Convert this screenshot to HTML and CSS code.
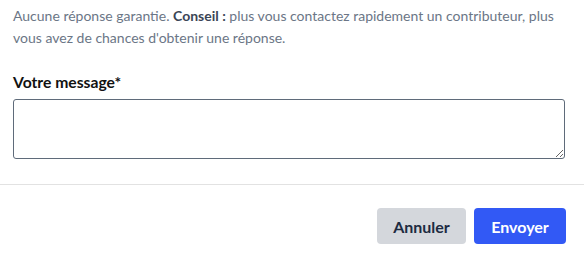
FILE: index.html
```html
<!DOCTYPE html>
<html lang="fr">
<head>
<meta charset="utf-8">
<link rel="stylesheet" href="styles.css">
</head>
<body>
<div class="modal">
  <div class="content">
    <p class="note">Aucune réponse garantie. <strong>Conseil :</strong> plus vous contactez rapidement un contributeur, plus vous avez de chances d'obtenir une réponse.</p>
    <label class="label" for="msg">Votre message*</label>
    <textarea id="msg" class="field"></textarea>
  </div>
  <div class="footer">
    <button class="btn btn-cancel">Annuler</button>
    <button class="btn btn-primary">Envoyer</button>
  </div>
</div>
</body>
</html>
```
FILE: styles.css
```css
* { box-sizing: border-box; }
html, body { margin: 0; padding: 0; background: #fff; }
body { font-family: Lato, "Liberation Sans", sans-serif; }
.modal { width: 584px; }
.content { padding: 5px 19px 25px 13px; display: flex; flex-direction: column; }
.note { margin: 0; font-size: 14px; line-height: 22px; color: #6b7686; }
.note strong { color: #3b4556; font-weight: 700; }
.label { margin-top: 23px; font-size: 15.7px; font-weight: 700; color: #111; line-height: 20px; }
.field { margin-top: 7px; height: 60px; width: 100%; border: 1px solid #5f6b7a; border-radius: 3px; resize: vertical; font: inherit; }
.footer { border-top: 1px solid #e2e2e2; padding: 23px 18px 10px; display: flex; justify-content: flex-end; gap: 8px; }
.btn { height: 36px; border: 0; border-radius: 4px; font-family: inherit; font-size: 16px; font-weight: 700; padding: 0 12px; }
.btn-cancel { background: #d4d7dc; color: #1d2b42; width: 89px; }
.btn-primary { background: #3259f5; color: #fff; width: 92px; }
```
